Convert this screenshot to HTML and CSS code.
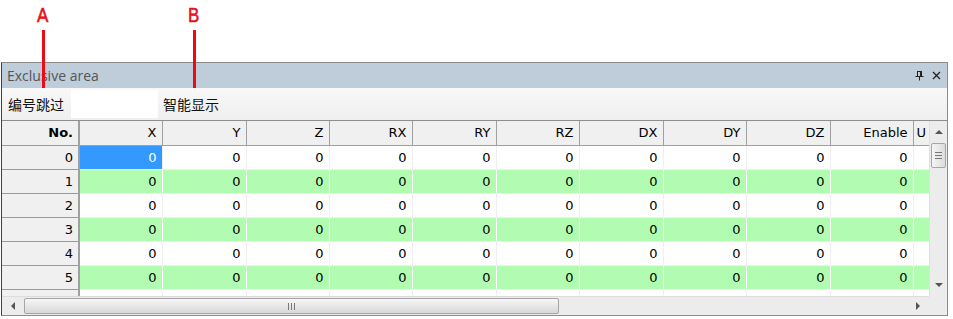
FILE: index.html
```html
<!DOCTYPE html>
<html lang="en">

<head>
    <meta charset="UTF-8">
    <title>Exclusive area</title>
    <link rel="stylesheet" href="styles.css">
</head>

<body>
    <!-- callout markers -->
    <div class="marker marker-a"><span>A</span><i></i></div>
    <div class="marker marker-b"><span>B</span><i></i></div>

    <div class="panel">
        <div class="titlebar">
            <span class="title">Exclusive area</span>
            <span class="tools">
                <svg width="9" height="10" viewBox="0 0 9 10">
                    <path d="M2 0.5h5M2.5 0.5v5M6.5 0.5v5M5.5 0.5v5M0.5 5.5h8M4.5 5.5v4" stroke="#222" fill="none" />
                </svg>
                <svg width="9" height="9" viewBox="0 0 9 9">
                    <path d="M1 1l7 7M8 1l-7 7" stroke="#222" stroke-width="1.3" fill="none" />
                </svg>
            </span>
        </div>
        <div class="toolbar">
            <label class="tool-label">编号跳过</label>
            <input type="text" class="tool-input">
            <label class="tool-label">智能显示</label>
        </div>
        <div class="grid-area">
            <div class="grid-view">
                <table id="grid">
                    <colgroup>
                        <col style="width:77px">
                        <col style="width:83px">
                        <col style="width:84px">
                        <col style="width:83px">
                        <col style="width:83px">
                        <col style="width:84px">
                        <col style="width:83px">
                        <col style="width:84px">
                        <col style="width:83px">
                        <col style="width:84px">
                        <col style="width:83px">
                        <col style="width:18px">
                    </colgroup>
                    <thead>
                        <tr>
                            <th class="row-head">No.</th>
                            <th>X</th>
                            <th>Y</th>
                            <th>Z</th>
                            <th>RX</th>
                            <th>RY</th>
                            <th>RZ</th>
                            <th>DX</th>
                            <th>DY</th>
                            <th>DZ</th>
                            <th>Enable</th>
                            <th class="clip">U</th>
                        </tr>
                    </thead>
                    <tbody></tbody>
                </table>
            </div>
            <div class="vscroll">
                <div class="arrow up"></div>
                <div class="vthumb"><span class="grip-h"></span></div>
                <div class="vtrack"></div>
                <div class="arrow down"></div>
            </div>
            <div class="hscroll">
                <div class="harrow left"></div>
                <div class="hthumb"><span class="grip-v"></span></div>
                <div class="htrack"></div>
                <div class="harrow right"></div>
            </div>
            <div class="corner"></div>
        </div>
    </div>

    <script>
        var tbody = document.querySelector("#grid tbody");
        for (var i = 0; i < 7; i++) {
            var row = tbody.insertRow();
            if (i % 2 == 1) row.className = "alt";
            var head = row.insertCell();
            head.className = "row-head";
            head.innerHTML = i;
            for (var c = 0; c < 10; c++) {
                var cell = row.insertCell();
                cell.innerHTML = "0";
                if (i == 0 && c == 0) cell.className = "selected";
            }
            row.insertCell();
        }
    </script>
</body>

</html>
```

FILE: styles.css
```css
body {
    margin: 0;
    background-color: #fff;
    font-family: "DejaVu Sans", "Noto Sans CJK SC", sans-serif;
    font-size: 13px;
    color: #000;
}

.marker {
    position: absolute;
    top: 4px;
    display: flex;
    flex-direction: column;
    align-items: center;
    width: 20px;
}

.marker span {
    color: #e8101a;
    font-family: "Liberation Sans", sans-serif;
    font-size: 20px;
    line-height: 22px;
    transform: scaleX(0.85);
    -webkit-text-stroke: 0.6px #e8101a;
}

.marker i {
    display: block;
    width: 3px;
    height: 58px;
    margin-top: 4px;
    background-color: #ee0a14;
}

.marker-a {
    left: 33px;
}

.marker-b {
    left: 184px;
}

.panel {
    margin: 62px 0 0 1px;
    width: 947px;
    border: 1px solid #8d8d8d;
    border-left-color: #404040;
    box-sizing: border-box;
}

.titlebar {
    height: 25px;
    background-color: #bfcddb;
    display: flex;
    align-items: center;
    justify-content: space-between;
    padding: 0 6px 0 5px;
}

.title {
    color: #555;
    font-family: "Open Sans", "Liberation Sans", sans-serif;
    font-size: 14px;
}

.tools {
    display: flex;
    align-items: center;
    gap: 8px;
}

.toolbar {
    height: 33px;
    display: flex;
    align-items: center;
    padding-left: 6px;
    background: linear-gradient(#f8f8f8, #efefef);
    border-bottom: 1px solid #8d8d8d;
    box-sizing: border-box;
}

.tool-label {
    font-family: "Noto Sans CJK SC", sans-serif;
    font-size: 14px;
    color: #111;
}

.tool-input {
    width: 87px;
    height: 28px;
    margin: 0 5px 0 7px;
    border: none;
    padding: 0;
    background-color: #fff;
}

.grid-area {
    display: grid;
    grid-template-columns: 927px 18px;
    grid-template-rows: 175px 19px;
    background-color: #fff;
}

.grid-view {
    overflow: hidden;
}

table {
    table-layout: fixed;
    border-collapse: collapse;
    width: 927px;
}

th,
td {
    height: 23px;
    box-sizing: border-box;
    padding: 0 5px 0 0;
    text-align: right;
    white-space: nowrap;
    overflow: hidden;
    border: 1px solid #efefef;
    border-top: none;
    border-left: none;
}

tr {
    height: 24px;
}

th {
    background-color: #f0f0f0;
    font-weight: normal;
    border-right: 1px solid #a0a0a0;
    border-bottom: 1px solid #a0a0a0;
}

th.clip {
    text-align: left;
    padding: 0 0 0 3px;
}

.row-head {
    background-color: #f0f0f0;
    border-right: 2px solid #a0a0a0;
    border-bottom: 1px solid #999;
    padding-right: 5px;
}

th.row-head {
    font-weight: bold;
}

tr.alt td {
    background-color: #b2fcb2;
    border-right-color: #fff;
}

tr.alt td.row-head {
    background-color: #f0f0f0;
    border-right-color: #a0a0a0;
}

td.selected {
    background-color: #3399ff;
    color: #fff;
}

.vscroll {
    display: flex;
    flex-direction: column;
    background-color: #ececec;
    border-left: 1px solid #e0e0e0;
}

.arrow,
.harrow {
    flex: none;
    display: flex;
    align-items: center;
    justify-content: center;
}

.arrow {
    height: 22px;
}

.arrow::after,
.harrow::after {
    content: "";
    border: 4px solid transparent;
}

.arrow.up::after {
    border-top: none;
    border-bottom-color: #555;
}

.arrow.down::after {
    border-bottom: none;
    border-top-color: #555;
}

.vthumb {
    height: 23px;
    margin: 0 1px;
    border: 1px solid #a6a6a6;
    border-radius: 2px;
    background: linear-gradient(90deg, #f4f4f4, #dcdcdc);
    display: flex;
    align-items: center;
    justify-content: center;
}

.grip-h {
    width: 7px;
    height: 7px;
    background: repeating-linear-gradient(#777 0 1px, transparent 1px 3px);
}

.vtrack,
.htrack {
    flex: 1;
}

.hscroll {
    display: flex;
    align-items: stretch;
    background-color: #ececec;
    border-top: 1px solid #dcdcdc;
}

.harrow {
    width: 22px;
}

.harrow.left::after {
    border-left: none;
    border-right-color: #555;
}

.harrow.right::after {
    border-right: none;
    border-left-color: #555;
}

.hthumb {
    width: 535px;
    margin: 1px 0;
    border: 1px solid #a6a6a6;
    border-radius: 2px;
    background: linear-gradient(#f6f6f6, #d8d8d8);
    display: flex;
    align-items: center;
    justify-content: center;
    box-sizing: border-box;
}

.grip-v {
    width: 7px;
    height: 7px;
    background: repeating-linear-gradient(90deg, #777 0 1px, transparent 1px 3px);
}

.corner {
    background-color: #ececec;
}
```
